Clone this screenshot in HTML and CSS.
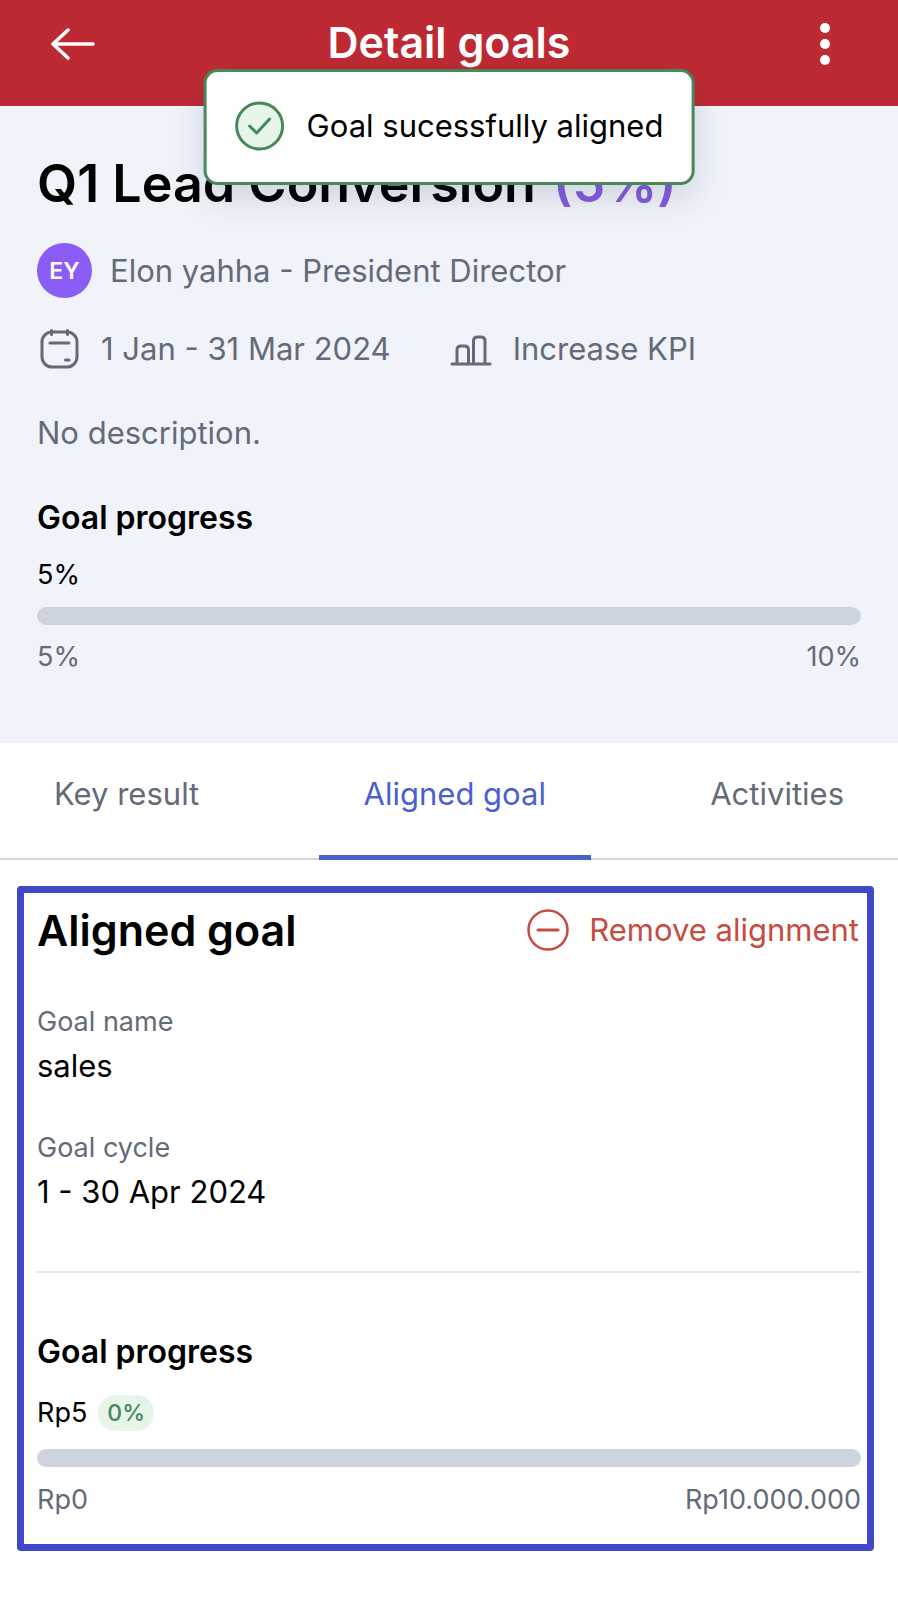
FILE: index.html
```html
<!DOCTYPE html>
<html lang="en">
<head>
<meta charset="utf-8">
<meta name="viewport" content="width=device-width, initial-scale=1">
<title>Detail goals</title>
<link rel="stylesheet" href="styles.css">
</head>
<body>
<header class="topbar">
  <button class="icon-button" type="button" aria-label="Back">
    <svg class="icon" width="44" height="44" viewBox="0 0 44 44" fill="none" stroke="currentColor" stroke-width="3.5" stroke-linecap="round" stroke-linejoin="round"><path d="M42 22H2M17 8 2 22l15 14"/></svg>
  </button>
  <h1 class="topbar-title">Detail goals</h1>
  <button class="icon-button" type="button" aria-label="More options">
    <svg class="icon" width="44" height="44" viewBox="0 0 44 44" fill="currentColor"><circle cx="22" cy="6" r="5"/><circle cx="22" cy="22" r="5"/><circle cx="22" cy="38" r="5"/></svg>
  </button>
  <div class="toast" role="status">
    <svg class="icon" width="50" height="50" viewBox="0 0 50 50" fill="none" stroke="#45895a" stroke-width="3" stroke-linecap="round" stroke-linejoin="round"><circle cx="25" cy="25" r="23" fill="#e6f4e9"/><path d="m15 25 7 7 13-14"/></svg>
    <span>Goal sucessfully aligned</span>
  </div>
</header>
<main>
  <section class="hero">
    <h2 class="goal-title">Q1 Lead Conversion <span class="weight">(5%)</span></h2>
    <div class="owner">
      <span class="avatar">EY</span>
      <span>Elon yahha - President Director</span>
    </div>
    <div class="meta">
      <span class="meta-item">
        <svg class="icon" width="44" height="44" viewBox="0 0 44 44" fill="none" stroke="currentColor" stroke-width="3" stroke-linecap="round"><rect x="5" y="5" width="35" height="35" rx="10"/><path d="M14.500 3.500v4M30.500 3.500v4M13 16h19M28.500 33h3.500"/></svg>
        <span>1 Jan - 31 Mar 2024</span>
      </span>
      <span class="meta-item">
        <svg class="icon" width="44" height="44" viewBox="0 0 44 44" fill="none" stroke="currentColor" stroke-width="3" stroke-linecap="round"><path d="M3 37h38M8 37V23q0-4 4-4h3.500q4 0 4 4v14M24.500 37V14q0-4 4-4H32q4 0 4 4v23"/></svg>
        <span>Increase KPI</span>
      </span>
    </div>
    <p class="description">No description.</p>
    <h3 class="progress-title" id="goal-progress">Goal progress</h3>
    <div class="progress-value">5%</div>
    <progress class="bar" value="0" max="10" aria-labelledby="goal-progress"></progress>
    <div class="range"><span>5%</span><span>10%</span></div>
  </section>
  <div class="tabs" role="tablist">
    <button class="tab" type="button" role="tab" aria-selected="false">Key result</button>
    <button class="tab tab-active" type="button" role="tab" aria-selected="true">Aligned goal</button>
    <button class="tab" type="button" role="tab" aria-selected="false">Activities</button>
  </div>
  <section class="panel">
    <div class="panel-head">
      <h2 class="panel-title">Aligned goal</h2>
      <button class="remove" type="button">
        <svg class="icon" width="42" height="42" viewBox="0 0 42 42" fill="none" stroke="currentColor" stroke-width="2.500" stroke-linecap="round"><circle cx="21" cy="21" r="19.500"/><path d="M11 21h20" stroke-width="3"/></svg>
        <span>Remove alignment</span>
      </button>
    </div>
    <dl class="details">
      <div class="detail"><dt>Goal name</dt><dd>sales</dd></div>
      <div class="detail"><dt>Goal cycle</dt><dd>1 - 30 Apr 2024</dd></div>
    </dl>
    <h3 class="progress-title" id="aligned-progress">Goal progress</h3>
    <div class="progress-value">Rp5 <span class="badge">0%</span></div>
    <progress class="bar" value="0" max="100" aria-labelledby="aligned-progress"></progress>
    <div class="range"><span>Rp0</span><span>Rp10.000.000</span></div>
  </section>
</main>
</body>
</html>
```
FILE: styles.css
```css
* { box-sizing: border-box; }
body {
  margin: 0;
  background: #fff;
  color: #000;
  font-family: Inter, "Liberation Sans", sans-serif;
  font-size: 31px;
  line-height: 40px;
}
h1, h2, h3, p, dl, dd { margin: 0; }
h1, h2, h3 { font-weight: 600; }
button {
  padding: 0;
  border: 0;
  background: none;
  color: inherit;
  font: inherit;
  cursor: pointer;
}
.icon { display: block; flex: none; }

.topbar {
  position: relative;
  display: flex;
  align-items: center;
  justify-content: space-between;
  padding: 14px 51px 32px;
  background: #be2a33;
  color: #fff;
}
.topbar-title { padding-bottom: 4px; font-size: 43px; line-height: 56px; }
.toast {
  position: absolute;
  top: 69px;
  left: 50%;
  transform: translateX(-50%);
  display: flex;
  align-items: center;
  gap: 22px;
  padding: 29px 28px 31px;
  border: 3px solid #45895a;
  border-radius: 14px;
  background: #fff;
  box-shadow: 0 12px 32px rgba(40, 50, 80, .16);
  color: #000;
  white-space: nowrap;
}

.hero {
  padding: 46px 37px 68px;
  background: #f0f3f9;
}
.goal-title { font-size: 52px; line-height: 64px; }
.weight { margin-left: 4px; color: #835be0; }
.owner, .meta, .description { color: #646b78; }
.owner {
  display: flex;
  align-items: center;
  gap: 18px;
  margin-top: 27px;
}
.avatar {
  display: grid;
  place-items: center;
  width: 55px;
  height: 55px;
  border-radius: 50%;
  background: #8b5cf6;
  color: #fff;
  font-size: 23px;
  font-weight: 600;
}
.meta {
  display: flex;
  gap: 58px;
  margin-top: 29px;
}
.meta-item { display: flex; align-items: center; gap: 20px; }
.description { margin-top: 42px; }
.progress-title { margin-top: 45px; font-size: 32px; }
.progress-value {
  display: flex;
  align-items: center;
  gap: 11px;
  margin-top: 19px;
  font-size: 27px;
  line-height: 36px;
}
.bar {
  display: block;
  width: 100%;
  height: 18px;
  margin: 14px 0;
  border: 0;
  border-radius: 9px;
  background: #ced4dd;
  overflow: hidden;
  appearance: none;
}
.bar::-webkit-progress-bar { background: #ced4dd; }
.bar::-webkit-progress-value { background: #4b5fd0; }
.range {
  display: flex;
  justify-content: space-between;
  color: #646b78;
  font-size: 27px;
  line-height: 36px;
}

.tabs {
  display: flex;
  justify-content: space-between;
  padding: 0 9px;
  box-shadow: inset 0 -2px #d3d6db;
}
.tab {
  padding: 31px 45px 41px;
  border-bottom: 5px solid transparent;
  color: #646b78;
}
.tab-active { border-color: #4b5fd0; color: #4b5fd0; }

.panel {
  margin: 26px 24px 48px 17px;
  padding: 9px 6px 26px 13px;
  border: 7px solid #4049c8;
  border-radius: 4px;
}
.panel-head {
  display: flex;
  align-items: center;
  justify-content: space-between;
}
.panel-title { font-size: 43px; line-height: 56px; }
.remove {
  display: flex;
  align-items: center;
  gap: 20px;
  padding-right: 2px;
  color: #c64c42;
}
.details {
  display: grid;
  gap: 44px;
  padding: 46px 0 59px;
  border-bottom: 2px solid #e4e5e7;
}
.detail { display: grid; gap: 6px; }
.detail dt { color: #646b78; font-size: 27px; line-height: 36px; }
.panel .progress-title { margin-top: 59px; }
.panel .progress-value { margin-top: 23px; }
.panel .bar { margin: 18px 0 15px; }
.badge {
  padding: 0 9px;
  border-radius: 18px;
  background: #e6f4e9;
  color: #45895a;
  font-size: 23px;
  font-weight: 500;
}
```
